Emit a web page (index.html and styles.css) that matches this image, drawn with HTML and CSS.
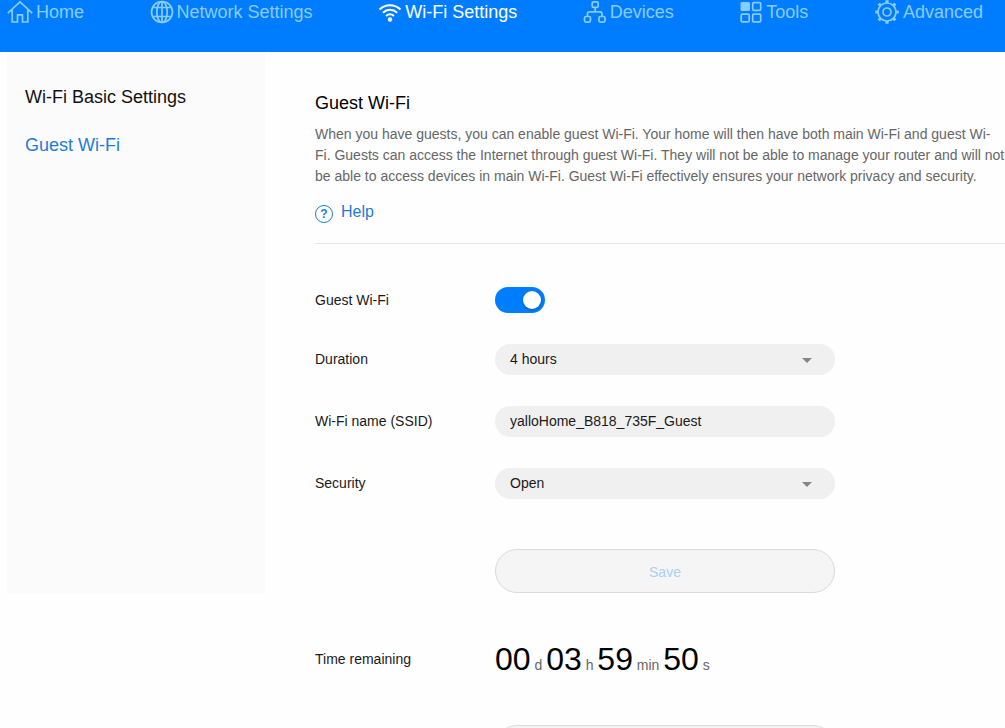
FILE: index.html
```html
<!DOCTYPE html>
<html lang="en">
<head>
<meta charset="utf-8">
<meta name="viewport" content="width=device-width, initial-scale=1">
<title>Guest Wi-Fi</title>
<link rel="stylesheet" href="styles.css">
</head>
<body>
<div class="page">
  <header class="topbar">
    <nav class="topnav">
      <a class="topnav-item" href="#home">
        <svg class="icon icon-wide" viewBox="0 0 26 24"><path d="M.8 13.200 13 1.800l12.200 11.400M5.200 10v12h5.300v-7.200h5V22h5.300V10"/></svg>
        <span>Home</span>
      </a>
      <a class="topnav-item" href="#network">
        <svg class="icon" viewBox="0 0 24 24"><circle cx="12" cy="12" r="10.500"/><ellipse cx="12" cy="12" rx="5.200" ry="10.500"/><path d="M12 1.500v21M2.600 7.500h18.800M2.600 16.500h18.800"/></svg>
        <span>Network Settings</span>
      </a>
      <a class="topnav-item topnav-item-current" href="#wifi" aria-current="page">
        <svg class="icon icon-wifi" viewBox="0 0 24 24"><path d="M1.500 9.500c6-5.700 15-5.700 21 0M4.800 12.800c4.300-4 10.100-4 14.400 0M8 16c2.400-2.100 5.600-2.100 8 0"/><circle class="solid" cx="12" cy="19.500" r="2.200"/></svg>
        <span>Wi-Fi Settings</span>
      </a>
      <a class="topnav-item" href="#devices">
        <svg class="icon" viewBox="0 0 24 24"><rect x="9.200" y="1.800" width="6" height="5.600" rx="1.500"/><rect x="1.500" y="16.500" width="6" height="5.600" rx="1.500"/><rect x="16" y="16.500" width="6" height="5.600" rx="1.500"/><path d="M12.200 7.500v4.300M4.500 16.500v-2.700a2 2 0 0 1 2-2H17a2 2 0 0 1 2 2v2.700"/></svg>
        <span>Devices</span>
      </a>
      <a class="topnav-item" href="#tools">
        <svg class="icon" viewBox="0 0 24 24"><rect class="solid" x="1.500" y="2" width="9.500" height="9" rx="1.500"/><rect x="13.700" y="2.700" width="8" height="7.600" rx="1"/><rect x="2.200" y="14.200" width="8" height="7.600" rx="1"/><rect x="13.700" y="14.200" width="8" height="7.600" rx="1"/></svg>
        <span>Tools</span>
      </a>
      <a class="topnav-item" href="#advanced">
        <svg class="icon icon-wide" viewBox="0 0 26 24"><circle cx="13" cy="12" r="9"/><circle cx="13" cy="12" r="4"/><path class="teeth" d="M13 3V.2M13 21v2.800M22 12h2.800M4 12H1.200M19.400 5.600l1.900-1.900M6.600 18.400l-1.900 1.900M19.400 18.400l1.900 1.900M6.600 5.600 4.700 3.700"/></svg>
        <span>Advanced</span>
      </a>
    </nav>
  </header>

  <div class="layout">
    <aside class="sidebar">
      <a class="side-link" href="#basic">Wi-Fi Basic Settings</a>
      <a class="side-link side-link-current" href="#guest" aria-current="page">Guest Wi-Fi</a>
    </aside>

    <main class="content">
      <h1 class="title">Guest Wi-Fi</h1>
      <p class="intro">When you have guests, you can enable guest Wi-Fi. Your home will then have both main Wi-Fi and guest Wi-Fi. Guests can access the Internet through guest Wi-Fi. They will not be able to manage your router and will not be able to access devices in main Wi-Fi. Guest Wi-Fi effectively ensures your network privacy and security.</p>
      <a class="help" href="#help">
        <span class="help-mark">?</span>
        <span>Help</span>
      </a>

      <form class="form">
        <div class="row">
          <label for="enabled">Guest Wi-Fi</label>
          <input class="switch" id="enabled" type="checkbox" role="switch" checked>
        </div>
        <div class="row">
          <label class="field-label" for="duration">Duration</label>
          <div class="select-box">
            <select class="field" id="duration"><option>4 hours</option></select>
            <svg class="arrow" viewBox="0 0 10 5"><path d="M0 0h10L5 5z"/></svg>
          </div>
        </div>
        <div class="row">
          <label class="field-label" for="ssid">Wi-Fi name (SSID)</label>
          <input class="field" id="ssid" type="text" value="yalloHome_B818_735F_Guest">
        </div>
        <div class="row">
          <label class="field-label" for="security">Security</label>
          <div class="select-box">
            <select class="field" id="security"><option>Open</option></select>
            <svg class="arrow" viewBox="0 0 10 5"><path d="M0 0h10L5 5z"/></svg>
          </div>
        </div>
        <div class="row row-spaced-more">
          <button class="button" type="submit" disabled>Save</button>
        </div>
        <div class="row row-spaced">
          <span>Time remaining</span>
          <div class="timer"><b>00</b> d <b>03</b> h <b>59</b> min <b>50</b> s</div>
        </div>
        <div class="row row-spaced">
          <button class="button" type="button"></button>
        </div>
      </form>
    </main>
  </div>
</div>
</body>
</html>
```
FILE: styles.css
```css
* {
  box-sizing: border-box;
}

body {
  margin: 0;
  background: #fefefe;
  color: #1a1a1a;
  font-family: "Liberation Sans", Arial, sans-serif;
  font-size: 14px;
  line-height: 20px;
}

a {
  text-decoration: none;
}

.page {
  height: 100vh;
  overflow-x: hidden;
  overflow-y: auto;
  scrollbar-width: none;
}

/* Top navigation */
.topbar {
  padding: 0 22px 28px 7px;
  background: #007dff;
}

.topnav {
  display: flex;
  justify-content: space-between;
}

.topnav-item {
  display: flex;
  align-items: center;
  gap: 3px;
  color: #8accff;
  font-size: 18px;
  line-height: 24px;
  white-space: nowrap;
}

.topnav-item-current {
  color: #fff;
}

.icon {
  width: 24px;
  height: 24px;
  fill: none;
  stroke: currentColor;
  stroke-width: 1.7;
}

.icon-wide {
  width: 26px;
}

.icon-wifi {
  stroke-width: 2;
}

.icon .solid {
  fill: currentColor;
  stroke: none;
}

.icon .teeth {
  stroke-width: 3;
}

/* Page body */
.layout {
  display: grid;
  grid-template-columns: 258px minmax(0, 1fr);
  column-gap: 50px;
  align-items: start;
  padding-left: 7px;
}

.sidebar {
  display: flex;
  flex-direction: column;
  gap: 24px;
  min-height: 541px;
  padding: 33px 18px;
  background: #fbfbfb;
}

.side-link {
  color: #111;
  font-size: 18px;
  line-height: 24px;
}

.side-link-current,
.help {
  color: #1f7bd8;
}

.content {
  padding-top: 39px;
}

.title {
  margin: 0 0 9px;
  color: #000;
  font-size: 18px;
  font-weight: 400;
  line-height: 24px;
}

.intro {
  margin: 0;
  color: #666;
  line-height: 21px;
}

.help {
  display: flex;
  align-items: flex-end;
  gap: 8px;
  width: fit-content;
  margin-top: 14px;
  font-size: 16px;
  line-height: 22px;
}

.help-mark {
  width: 18px;
  height: 18px;
  border: 1px solid currentColor;
  border-radius: 50%;
  font-size: 12px;
  font-weight: 700;
  line-height: 16px;
  text-align: center;
}

.form {
  display: flex;
  flex-direction: column;
  gap: 31px;
  margin-top: 20px;
  padding: 43px 0 32px;
  border-top: 1px solid #e5e5e5;
}

.row {
  display: grid;
  grid-template-columns: 180px minmax(0, 340px);
  align-items: center;
}

.row-spaced {
  margin-top: 15px;
}

.row-spaced-more {
  margin-top: 19px;
}

.field-label {
  padding-bottom: 2px;
}

.field {
  width: 100%;
  height: 31px;
  margin: 0;
  padding: 0 15px 2px;
  border: 0;
  border-radius: 16px;
  background: #f0f0f0;
  color: #1a1a1a;
  font: inherit;
  appearance: none;
}

.select-box {
  position: relative;
  display: flex;
}

.arrow {
  position: absolute;
  top: 14px;
  right: 23px;
  width: 10px;
  height: 5px;
  fill: #858585;
  pointer-events: none;
}

.switch {
  display: flex;
  justify-content: flex-end;
  align-items: center;
  width: 50px;
  height: 26px;
  margin: 0;
  padding: 0 4px;
  border-radius: 13px;
  background: #007dff;
  appearance: none;
}

.switch::before {
  width: 18px;
  height: 18px;
  border-radius: 50%;
  background: #fff;
  box-shadow: 0 1px 3px rgba(0, 0, 0, 0.3);
  content: "";
}

.button {
  grid-column: 2;
  height: 44px;
  padding: 2px 0 0;
  border: 1px solid #dadada;
  border-radius: 22px;
  background: #f5f5f5;
  color: #a9d0f2;
  font: inherit;
}

.timer {
  color: #666;
  line-height: 20px;
}

.timer b {
  color: #000;
  font-size: 32px;
  font-weight: 400;
  line-height: 40px;
}
```
